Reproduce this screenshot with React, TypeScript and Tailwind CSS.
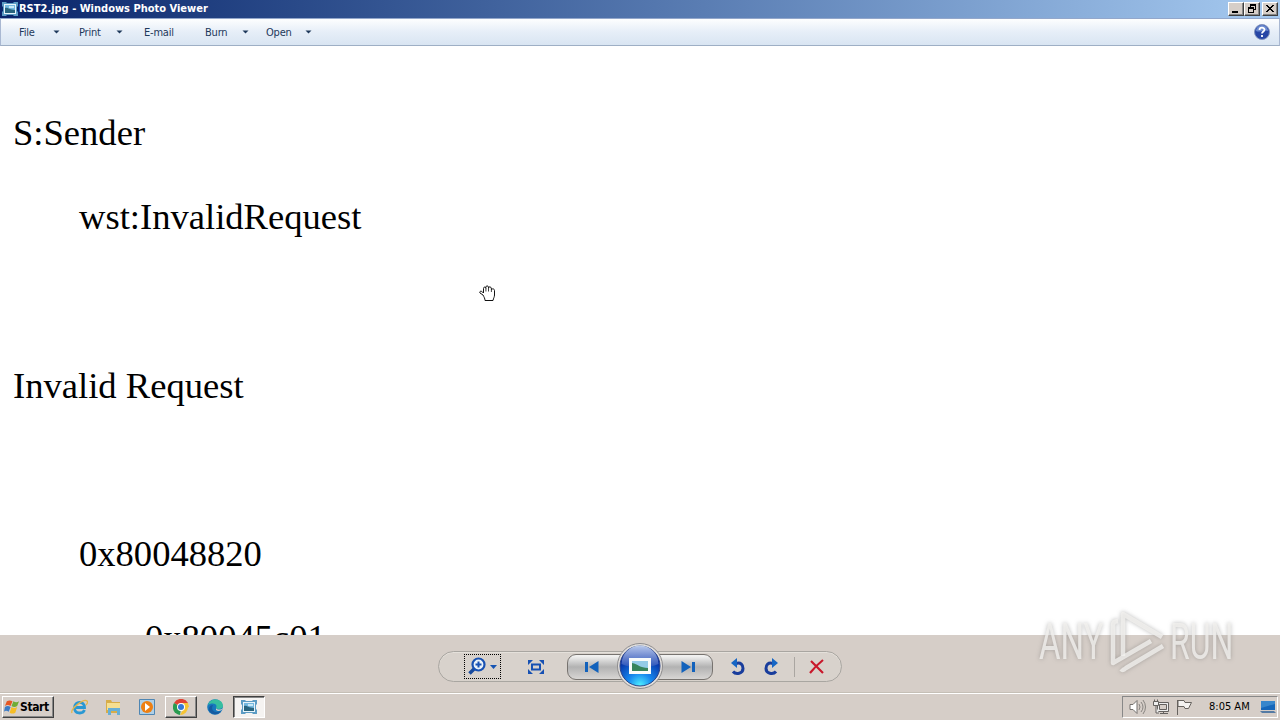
import type { ReactNode } from "react";

const lines = [
  { text: "S:Sender", pad: "pl-[13px]" },
  { text: "wst:InvalidRequest", pad: "pl-[79px]" },
  { text: "", pad: "" },
  { text: "Invalid Request", pad: "pl-[13px]" },
  { text: "", pad: "" },
  { text: "0x80048820", pad: "pl-[79px]" },
  { text: "0x80045c01", pad: "pl-[145px]" },
];

const menu = [
  { label: "File", text: "w-[34px]", arrow: true, gap: "mr-[19px]" },
  { label: "Print", text: "w-[37px]", arrow: true, gap: "mr-[21px]" },
  { label: "E-mail", text: "w-[61px]", arrow: false, gap: "" },
  { label: "Burn", text: "w-[37px]", arrow: true, gap: "mr-[17px]" },
  { label: "Open", text: "w-[39px]", arrow: true, gap: "" },
];

function CaptionButton({ children }: { children: ReactNode }) {
  return (
    <div className="h-[14px] w-4 border border-t-white border-l-white border-r-[#404040] border-b-[#404040] bg-[#d6cec8] shadow-[inset_-1px_-1px_#888]">
      <svg width="14" height="12" viewBox="0 0 14 12" fill="none" stroke="#000" shapeRendering="crispEdges">
        {children}
      </svg>
    </div>
  );
}

function PhotoIcon() {
  return (
    <svg width="16" height="14" viewBox="0 0 16 14">
      <path d="M0 0h4l1 1h6l1-1h4v4l-1 1v4l1 1v4h-4l-1-1H5l-1 1H0v-4l1-1V5L0 4z" fill="#5c9cc4" />
      <path d="M2 2h12v10H2z" fill="#e8f4fa" />
      <path d="M3 3h10v8H3z" fill="#75b8df" />
      <path d="M3 6c3-1 4 2 10 2v3H3z" fill="#28647e" />
      <path d="M7 4h5v2H7z" fill="#c7e8f6" />
    </svg>
  );
}

function TitleBar() {
  return (
    <header className="flex h-[18px] shrink-0 items-center bg-linear-to-r from-[#0a246a] to-[#a6caf0] pr-[2px] pl-[2px]">
      <PhotoIcon />
      <span className="ml-px text-[11px] font-bold tracking-[0px] whitespace-nowrap text-white [font-stretch:condensed]">
        RST2.jpg - Windows Photo Viewer
      </span>
      <div className="ml-auto flex">
        <CaptionButton>
          <path d="M3 9h6" strokeWidth="2" />
        </CaptionButton>
        <CaptionButton>
          <path d="M5 2h6M5 1h6M5.500 1v3M10.500 1v6M8 6.500h3M3 4.500h6M3 5.500h6M3.500 4v6M8.500 4v6M3 9.500h6" />
        </CaptionButton>
        <div className="ml-[2px]">
          <CaptionButton>
            <path d="m3 2 7 7M4 2l7 7M10 2 3 9M11 2 4 9" shapeRendering="auto" />
          </CaptionButton>
        </div>
      </div>
    </header>
  );
}

function MenuBar() {
  return (
    <nav className="flex h-7 shrink-0 items-center border border-t-[#93a7cb] border-r-[#a9b8d2] border-b-[#9eafc5] border-l-[#a9b8d2] bg-linear-to-b from-[#fdfefe] via-[#e6eef8] via-50% to-[#d9e5f2] pr-[9px] pl-[18px] text-[11px] tracking-[-0.2px] text-[#1e395b] [font-stretch:condensed]">
      {menu.map((item) => (
        <div key={item.label} className={`flex items-center ${item.gap}`}>
          <span className={`pt-[2px] whitespace-nowrap ${item.text}`}>{item.label}</span>
          {item.arrow && (
            <svg width="7" height="4" viewBox="0 0 7 4">
              <path d="M.5 0.500h6L3.500 3.500z" fill="#1e395b" />
            </svg>
          )}
        </div>
      ))}
      <svg className="ml-auto" width="16" height="16" viewBox="0 0 16 16">
        <circle cx="8" cy="8" r="7.500" fill="#2746a5" stroke="#8394bd" />
        <path d="M2 7a6 6 0 0 1 12 0c-4-2-8 2-12 0" fill="#6c8bd0" />
        <path d="M5.500 6c0-3 5-3 5-.3C10.500 7.500 8 7.500 8 9.500M8 11v2" fill="none" stroke="#fff" strokeWidth="1.800" />
      </svg>
    </nav>
  );
}

function HandCursor() {
  return (
    <svg className="absolute top-[238px] left-[479px]" width="18" height="18" viewBox="0 0 18 18">
      <path
        d="M4 11 1 9C0 7.500 2 6.500 3.500 8L4.500 9V4.500c0-1.800 2-1.800 2.300-.3V3c.3-1.500 2.300-1.500 2.700 0v.8c.5-1.500 2.500-1.200 2.800.4l.2 1.300c1-1.200 3-.6 3 1V11c0 2-1 3-1.500 5.500H6c0-2-1-3.500-2-5.500z"
        fill="#fff"
        stroke="#111"
      />
      <path d="M6.900 4v3.500M9.500 3.500v4M12.400 4.500v3.500" stroke="#111" strokeWidth=".8" />
    </svg>
  );
}

function Watermark() {
  return (
    <div className="absolute top-[604px] left-[1039px] flex h-[72px] w-[196px] items-center font-['Roboto',sans-serif] text-[50px] leading-none text-[#f3f1ef]/80 drop-shadow-[0_0_2px_rgba(90,90,90,0.5)]">
      <span className="w-16 origin-left scale-x-[0.66] pt-[4px]">ANY</span>
      <svg className="ml-[3px] shrink-0" width="62" height="72" viewBox="0 0 62 72" fill="none" stroke="currentColor" strokeWidth="4.500" strokeLinejoin="round">
        <path d="M17 52V10l39 23" />
        <path d="M12 17q-5 0-5 4v38l38-22" />
        <path d="M15 65q2 2 5-1l37-22" />
      </svg>
      <span className="ml-[2px] w-16 origin-left scale-x-[0.64] pt-[4px]">RUN</span>
    </div>
  );
}

function Controls() {
  return (
    <div className="flex h-[58px] shrink-0 justify-center border-b border-[#c5bfb6] bg-[#d6cec8] pt-[16px]">
      <div className="relative mr-px flex h-[31px] w-[404px] items-center rounded-full border border-[#a9a6a1] bg-[#d8d2cc] shadow-[inset_0_1px_#e5e1db]">
        <div className="ml-[25px] flex h-[25px] w-[37px] items-center border border-dotted border-black pl-[3px]">
          <svg width="19" height="19" viewBox="0 0 19 19" fill="none">
            <path d="m1.500 16.500 5-5" stroke="#184a9d" strokeWidth="3.500" />
            <circle cx="10.500" cy="7.500" r="6" fill="#eaf3fa" stroke="#1751b3" strokeWidth="2.200" />
            <path d="M7.500 7.500h6M10.500 4.500v6" stroke="#1751b3" strokeWidth="2" />
          </svg>
          <svg className="ml-[3px]" width="7" height="4" viewBox="0 0 7 4">
            <path d="M0 0h7L3.500 4z" fill="#1554b3" />
          </svg>
        </div>
        <svg className="ml-[27px]" width="16" height="14" viewBox="0 0 16 14" fill="none">
          <path d="M0 0h5L0 5zM11 0h5v5zM0 9v5h5zM16 9v5h-5z" fill="#1751b3" />
          <path d="M4 4.500h8v5H4z" stroke="#1751b3" strokeWidth="2" />
        </svg>
        <div className="ml-[23px] flex h-[26px] w-[146px] shrink-0 items-center justify-between rounded-[9px] border border-[#77736f] bg-linear-to-b from-[#f1f1f0] from-5% via-[#b2b2b2] via-50% to-[#d8d6d4] px-4">
          <svg width="15" height="12" viewBox="0 0 15 12">
            <path d="M1 1h3v10H1zM14.500 0v12L5 6z" fill="#1262bc" />
          </svg>
          <svg width="15" height="12" viewBox="0 0 15 12">
            <path d="M11 1h3v10h-3zM.5 0v12L10 6z" fill="#1262bc" />
          </svg>
        </div>
        <svg className="ml-[17px]" width="16" height="18" viewBox="0 0 16 18">
          <path d="M6 5.500C11 4 13 7 13 10.500c0 5-7 6.500-10 3" fill="none" stroke="#193d9c" strokeWidth="3" />
          <path d="m1 5 6-5v10z" fill="#1666c4" />
        </svg>
        <svg className="ml-[17px]" width="16" height="18" viewBox="0 0 16 18">
          <path d="M10 5.500C5 4 3 7 3 10.500c0 5 7 6.500 10 3" fill="none" stroke="#193d9c" strokeWidth="3" />
          <path d="M15 5 9 0v10z" fill="#1666c4" />
        </svg>
        <div className="ml-[15px] h-5 w-px bg-[#aaa6a1]" />
        <svg className="ml-[14px]" width="16" height="16" viewBox="0 0 16 16" fill="none">
          <path d="m2 2 12 12M14 1C9 5 5 9 1 14" stroke="#c9182b" strokeWidth="2.200" />
        </svg>
        <svg className="absolute top-[-10px] left-[177px]" width="48" height="48" viewBox="0 0 48 48">
          <defs>
            <radialGradient id="orb" cx=".5" cy=".98" r=".75">
              <stop offset="0" stopColor="#4ff0ff" />
              <stop offset=".4" stopColor="#1689ef" />
              <stop offset="1" stopColor="#072b9f" />
            </radialGradient>
            <linearGradient id="gloss" x2="0" y2="1">
              <stop stopColor="#e4f0ff" />
              <stop offset="1" stopColor="#2a50b8" />
            </linearGradient>
          </defs>
          <circle cx="24" cy="24" r="22.500" fill="#e2dfdc" stroke="#8d8c8d" />
          <circle cx="24" cy="24" r="20" fill="url(#orb)" stroke="#2d4688" />
          <path d="M5.500 22a18.500 18.500 0 0 1 37 0c-12 5-25 5-37 0" fill="url(#gloss)" opacity=".8" />
          <path d="M13 16h22v16H13z" fill="#f8fbfa" />
          <path d="M16 19h16v10H16z" fill="#94cbe7" />
          <path d="M16 21c6 1 8 5 16 5v3H16z" fill="#37845b" />
        </svg>
      </div>
    </div>
  );
}

function Taskbar() {
  return (
    <footer className="flex h-[27px] shrink-0 items-center border-t border-white bg-[#d6cec8] pr-[2px] pl-[2px]">
      <div className="flex h-[22px] w-[52px] items-center border border-t-white border-l-white border-r-[#404040] border-b-[#404040] pl-px shadow-[inset_-1px_-1px_#888]">
        <svg className="shrink-0" width="16" height="16" viewBox="0 0 17 16">
          <path d="M3 2q3-2 6 0L7 7Q4 5 1 7z" fill="#e55724" />
          <path d="M10 2q3 2 6 0l-2 5q-3 2-6 0z" fill="#6fac35" />
          <path d="M1 8q3-2 6 0l-2 5q-3-2-5 0z" fill="#3c7bc5" />
          <path d="M8 8q3 2 6 0l-2 6q-3 2-6 0z" fill="#f6bd25" />
        </svg>
        <span className="text-[12px] font-bold tracking-[-0.4px] [font-stretch:condensed]">Start</span>
      </div>
      <svg className="ml-[17px]" width="17" height="16" viewBox="0 0 17 16" fill="none">
        <path d="M13.500 11c-2 4.500-10 4-10-2 0-7.500 10-7.500 10-.5H5" stroke="#2998d3" strokeWidth="2.800" />
        <path d="M1 14C-1 10 13-1 16 2c1 1 0 3-1 4" stroke="#e4b64b" strokeWidth="1.300" />
      </svg>
      <svg className="ml-[17px]" width="17" height="16" viewBox="0 0 17 16">
        <path d="M1 1h5l1 2h8v11H1z" fill="#d7ad49" />
        <path d="M2 4h13v7H2z" fill="#f5df91" />
        <path d="M3 9h12v7h-3v-4H6v4H3z" fill="#67afd6" />
      </svg>
      <svg className="ml-[17px]" width="16" height="16" viewBox="0 0 16 16">
        <path d="M.5.500h15v15H.5z" fill="#afcfe6" stroke="#4f86b3" />
        <circle cx="8" cy="8" r="6" fill="#ee7f12" />
        <path d="m6 4 5 4-5 4z" fill="#fff" />
      </svg>
      <div className="ml-[10px] flex h-[22px] w-8 items-center justify-center border border-t-white border-l-white border-r-[#404040] border-b-[#404040] shadow-[inset_-1px_-1px_#888]">
        <svg width="16" height="16" viewBox="0 0 16 16">
          <path d="M8 8 1 4a8 8 0 0 1 14 0z" fill="#df4234" />
          <path d="M8 8 1 4a8 8 0 0 0 6 12z" fill="#299b50" />
          <path d="M8 8h7a8 8 0 0 1-8 8l4-7z" fill="#f5c433" />
          <path d="M8 4h7l1 4-5 2z" fill="#f5c433" />
          <circle cx="8" cy="8" r="4" fill="#fff" />
          <circle cx="8" cy="8" r="3" fill="#3478d7" />
        </svg>
      </div>
      <svg className="ml-[10px]" width="17" height="16" viewBox="0 0 17 16">
        <circle cx="8" cy="8" r="7.800" fill="#1678bd" />
        <path d="M1 6C3-2 16-1 16 7c0 3-5 4-7 2 2-4-3-6-8-3z" fill="#36bea0" />
        <path d="M6 6c-3 5 2 9 8 6-2 4-7 4-10 2C0 11 2 6 6 6z" fill="#155ba1" />
        <path d="M9 9c1 2 5 2 7 0-1 3-5 4-7 2z" fill="#d6cec8" />
      </svg>
      <div className="ml-[9px] flex h-[22px] w-8 items-center justify-center border border-t-[#404040] border-l-[#404040] border-r-white border-b-white bg-[#f5f3f1] shadow-[inset_1px_1px_#888]">
        <PhotoIcon />
      </div>
      <div className="ml-auto flex h-[22px] w-[156px] items-center border border-t-[#888] border-l-[#888] border-r-white border-b-white pl-[6px]">
        <svg width="17" height="16" viewBox="0 0 17 16" fill="#fff" stroke="#74716e">
          <path d="M1 5.500h3l4-4v13l-4-4H1z" />
          <path d="M10 5q2 3 0 6M12 3q4 5 0 10M14 1q5 7 0 14" fill="none" strokeWidth=".8" />
        </svg>
        <svg className="ml-[7px]" width="16" height="16" viewBox="0 0 16 16" fill="#eee" stroke="#64615f">
          <path d="M4.500 3.500h11v9h-11zM7 14.500h8M10.500 12v2" />
          <path d="M6.500 5.500h7v5h-7z" fill="#d6cec8" />
          <path d="M.5 2.500h5v4h-5zM1.500.500v2M4.500.500v2M3 7v7h3" />
        </svg>
        <svg className="ml-[7px]" width="17" height="16" viewBox="0 0 17 16" fill="#f4f2f0" stroke="#67635f">
          <path d="M1.500 1v15M2 1.500h6l1 2h6.500l-3 6H9l-1-2H2z" />
        </svg>
        <span className="ml-[16px] w-[45px] text-[11px] tracking-[0px] whitespace-nowrap [font-stretch:condensed]">8:05 AM</span>
        <svg className="ml-[6px]" width="16" height="14" viewBox="0 0 16 14">
          <path d="M1 1h14v9H1z" fill="#1566ba" />
          <path d="m1 1 14 0v3L1 8z" fill="#3786cc" />
          <path d="M0 11h14l2 2H2z" fill="#557ba4" />
        </svg>
      </div>
    </footer>
  );
}

export default function App() {
  return (
    <div className="relative flex h-[720px] w-[1280px] flex-col overflow-hidden bg-white font-['DejaVu_Sans_Condensed','DejaVu_Sans',sans-serif] text-black">
      <TitleBar />
      <MenuBar />
      <main className="relative h-[589px] shrink-0 overflow-hidden bg-white pt-[45.400px] font-['Liberation_Serif',serif] text-[36.600px]">
        {lines.map((line, i) => (
          <div key={i} className={`h-[84.100px] leading-[84.100px] whitespace-nowrap ${line.pad}`}>
            {line.text}
          </div>
        ))}
        <HandCursor />
      </main>
      <Controls />
      <Taskbar />
      <Watermark />
    </div>
  );
}
